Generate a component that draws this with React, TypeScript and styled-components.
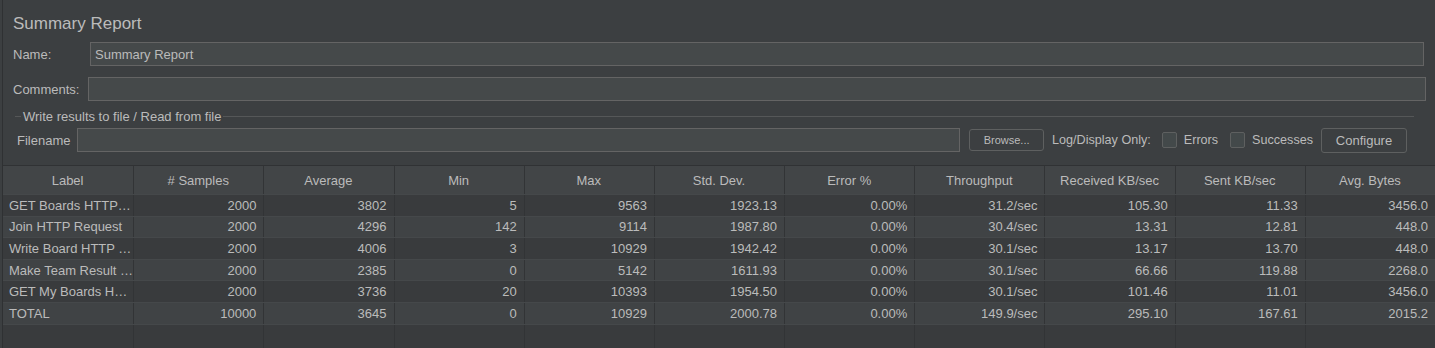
import styled, { createGlobalStyle } from "styled-components";

const GlobalStyle = createGlobalStyle`
  html, body {
    margin: 0;
    padding: 0;
    background: #3c3f41;
  }
  body {
    font-family: "Liberation Sans", Arial, sans-serif;
    color: #bbbbbb;
    font-size: 13px;
  }
  * {
    box-sizing: border-box;
  }
`;

const columns = [
  "Label",
  "# Samples",
  "Average",
  "Min",
  "Max",
  "Std. Dev.",
  "Error %",
  "Throughput",
  "Received KB/sec",
  "Sent KB/sec",
  "Avg. Bytes",
];

const rows = [
  ["GET Boards HTTP…", "2000", "3802", "5", "9563", "1923.13", "0.00%", "31.2/sec", "105.30", "11.33", "3456.0"],
  ["Join HTTP Request", "2000", "4296", "142", "9114", "1987.80", "0.00%", "30.4/sec", "13.31", "12.81", "448.0"],
  ["Write Board HTTP …", "2000", "4006", "3", "10929", "1942.42", "0.00%", "30.1/sec", "13.17", "13.70", "448.0"],
  ["Make Team Result …", "2000", "2385", "0", "5142", "1611.93", "0.00%", "30.1/sec", "66.66", "119.88", "2268.0"],
  ["GET My Boards H…", "2000", "3736", "20", "10393", "1954.50", "0.00%", "30.1/sec", "101.46", "11.01", "3456.0"],
  ["TOTAL", "10000", "3645", "0", "10929", "2000.78", "0.00%", "149.9/sec", "295.10", "167.61", "2015.2"],
];

const Page = styled.div`
  height: 348px;
  display: flex;
  flex-direction: column;
  border-left: 1px solid #2f3133;
  margin-left: 2px;
  overflow: hidden;
`;

const Title = styled.div`
  font-size: 17px;
  color: #bbbbbb;
  padding: 14px 0 0 10px;
  height: 42px;
`;

const FieldRow = styled.div<{ $inset: number; $labelWidth: number; $gap: number }>`
  display: flex;
  align-items: center;
  height: 24px;
  margin: 0 ${(p) => 11 + p.$inset}px ${(p) => p.$gap}px 10px;

  & > label {
    width: ${(p) => p.$labelWidth}px;
    flex-shrink: 0;
  }
`;

const TextInput = styled.div`
  flex: 1;
  height: 24px;
  background: #45494a;
  border: 1px solid #646464;
  padding: 0 4px;
  display: flex;
  align-items: center;
  color: #bbbbbb;
`;

const Group = styled.fieldset`
  margin: 0 21px 0 12px;
  padding: 0 7px 0 2px;
  border: none;
  border-top: 1px solid #555758;
  min-width: 0;

  & > legend {
    padding: 0 2px;
    margin-left: 4px;
    color: #bbbbbb;
  }
`;

const FileRow = styled.div`
  display: flex;
  align-items: center;
  height: 26px;
  margin-top: 3px;
  white-space: nowrap;
  font-size: 12.6px;

  & > * {
    flex-shrink: 0;
  }
`;

const FileLabel = styled.label`
  width: 60px;
  font-size: 13px;
`;

const FileInput = styled(TextInput)`
  flex: 1 1 auto;
  flex-shrink: 1 !important;
  min-width: 0;
`;

const Button = styled.div<{ $small?: boolean }>`
  display: flex;
  align-items: center;
  justify-content: center;
  border: 1px solid #5e6060;
  border-radius: 3px;
  background: #3c3f41;
  color: #bbbbbb;
  font-size: ${(p) => (p.$small ? "11px" : "13px")};
  height: ${(p) => (p.$small ? "22px" : "25px")};
`;

const Browse = styled(Button)`
  margin-left: 9px;
  width: 75px;
`;

const Configure = styled(Button)`
  margin-left: 8px;
  width: 86px;
`;

const Plain = styled.span`
  margin-left: 8px;
`;

const CheckItem = styled.span<{ $space: number }>`
  display: flex;
  align-items: center;
  margin-left: ${(p) => p.$space}px;
  gap: 7px;
`;

const Box = styled.span`
  width: 15px;
  height: 16px;
  border: 1px solid #5e6060;
  border-radius: 2px;
  background: #43494a;
`;

const Table = styled.div`
  margin-top: 12px;
  flex: 1;
  display: flex;
  flex-direction: column;
  background: #3a3c3e;
`;

const TableRow = styled.div<{ $kind: "head" | "odd" | "even" | "fill" }>`
  display: grid;
  grid-template-columns: repeat(11, 1fr);
  height: ${(p) => (p.$kind === "head" ? "29px" : p.$kind === "fill" ? "auto" : "21.6px")};
  flex: ${(p) => (p.$kind === "fill" ? 1 : "none")};
  background: ${(p) =>
    p.$kind === "head" ? "#424547" : p.$kind === "even" ? "#404345" : "#393b3d"};
  border-top: 1px solid ${(p) => (p.$kind === "head" ? "#303234" : "#45484a")};
`;

const Cell = styled.div<{ $align: "left" | "right" | "center" }>`
  display: flex;
  align-items: center;
  justify-content: ${(p) => (p.$align === "left" ? "flex-start" : p.$align === "right" ? "flex-end" : "center")};
  padding: 0 7px 0 6px;
  border-left: 1px solid #323436;
  white-space: nowrap;
  overflow: hidden;
  color: #bbbbbb;

  &:first-child {
    border-left: none;
  }
`;

export default function App() {
  return (
    <>
      <GlobalStyle />
      <Page>
        <Title>Summary Report</Title>
        <FieldRow $inset={0} $labelWidth={77} $gap={11}>
          <label>Name:</label>
          <TextInput>Summary Report</TextInput>
        </FieldRow>
        <FieldRow $inset={-2} $labelWidth={75} $gap={8}>
          <label>Comments:</label>
          <TextInput />
        </FieldRow>
        <Group>
          <legend>Write results to file / Read from file</legend>
          <FileRow>
            <FileLabel>Filename</FileLabel>
            <FileInput />
            <Browse $small>Browse...</Browse>
            <Plain>Log/Display Only:</Plain>
            <CheckItem $space={11}>
              <Box />
              Errors
            </CheckItem>
            <CheckItem $space={12}>
              <Box />
              Successes
            </CheckItem>
            <Configure>Configure</Configure>
          </FileRow>
        </Group>
        <Table>
          <TableRow $kind="head">
            {columns.map((c) => (
              <Cell key={c} $align="center">
                {c}
              </Cell>
            ))}
          </TableRow>
          {rows.map((r, i) => (
            <TableRow key={r[0]} $kind={i % 2 === 0 ? "odd" : "even"}>
              {r.map((v, j) => (
                <Cell key={j} $align={j === 0 ? "left" : "right"}>
                  {v}
                </Cell>
              ))}
            </TableRow>
          ))}
          <TableRow $kind="fill">
            {columns.map((c) => (
              <Cell key={c} $align="left" />
            ))}
          </TableRow>
        </Table>
      </Page>
    </>
  );
}
